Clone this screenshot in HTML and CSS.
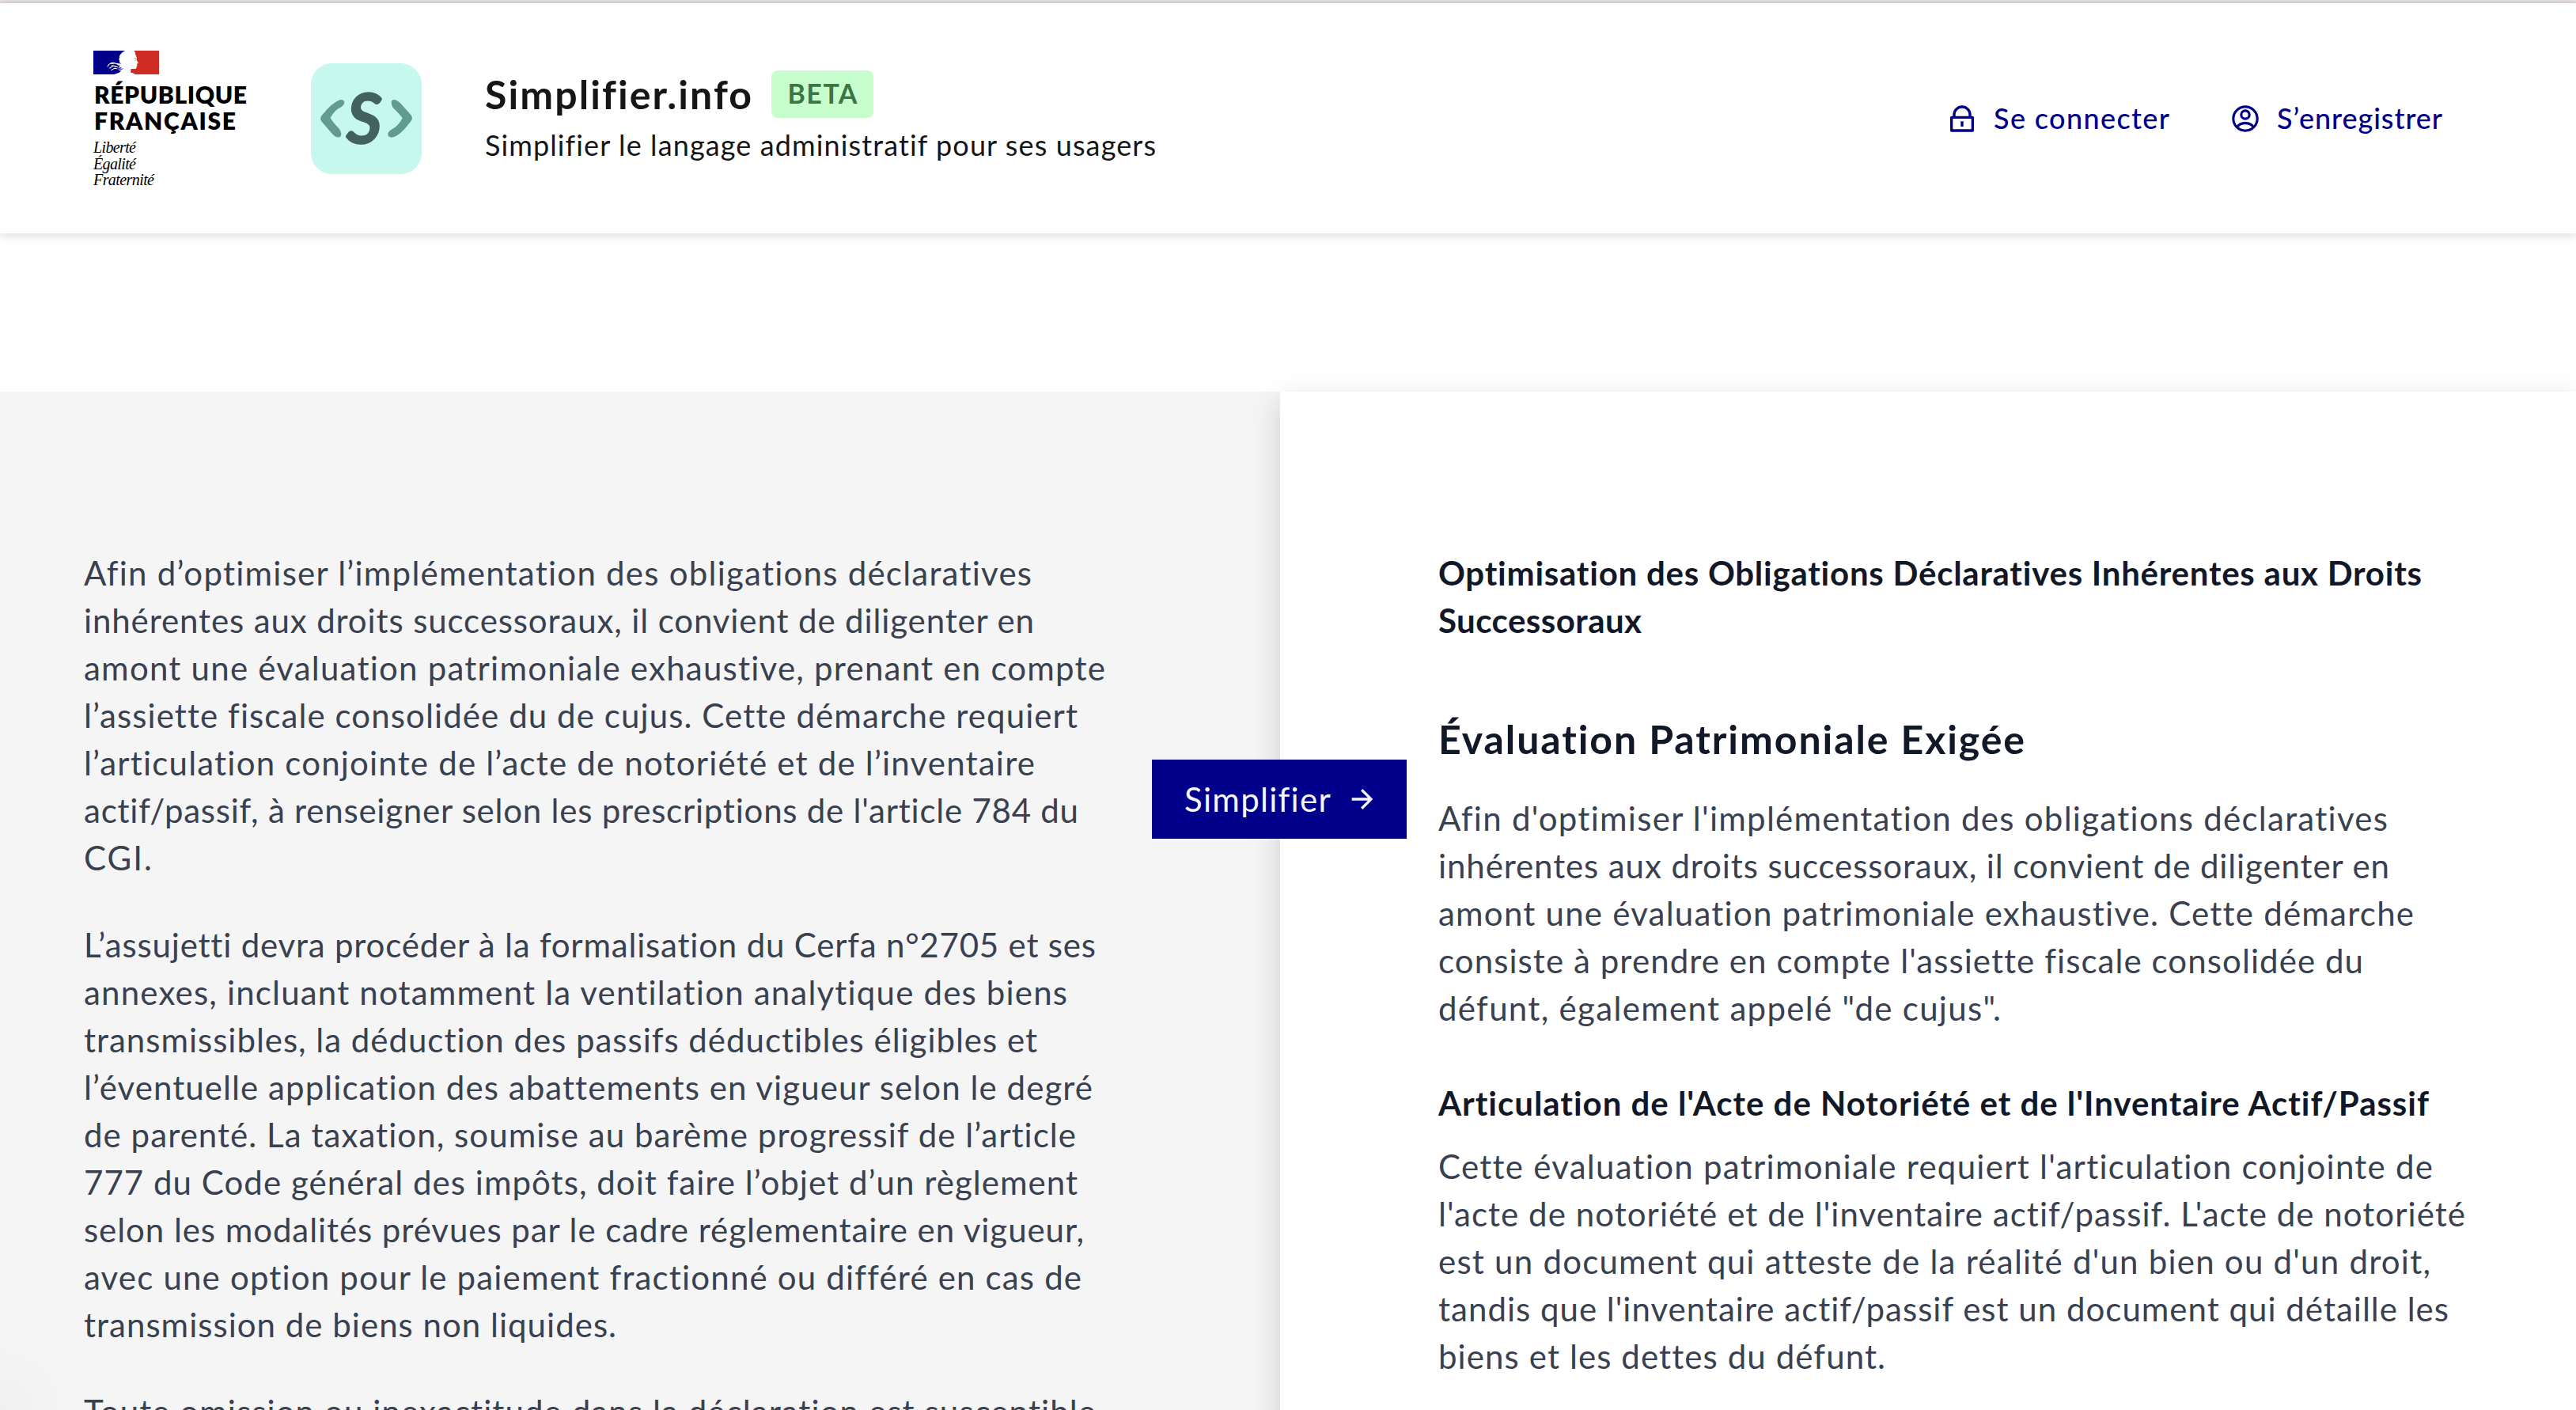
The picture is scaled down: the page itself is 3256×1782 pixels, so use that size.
FILE: index.html
```html
<!DOCTYPE html>
<html lang="fr">
<head>
<meta charset="utf-8">
<title>Simplifier.info</title>
<link rel="stylesheet" href="styles.css">
</head>
<body>
<div class="top-strip"></div>
<header class="header">
  <div class="brand">
    <svg class="flag" viewBox="54 72 248 90" preserveAspectRatio="none" aria-hidden="true">
      <rect x="54" y="72" width="248" height="90" fill="#fff"/>
      <path fill="#00008b" d="M54 72H174Q160 78 155 88Q151 93 153 98Q148 104 153 110Q150 116 158 120Q164 126 165 136L160 150Q150 158 132 162H54Z"/>
      <path fill="#cf2c24" d="M207 72H302V162H212Q203 155 195 155Q195 148 196 141H213Q219 139 217 133L220 128L218 123L224 119L217 107L218 98L213 86Q214 78 207 72Z"/>
      <path fill="none" stroke="#fff" stroke-width="3" stroke-linecap="round" d="M108 132Q113 119 128 121Q138 118 150 127M119 120Q128 115 140 121L156 124M116 138L128 130L146 134M122 146L134 139L156 142M124 128L140 131"/>
      <path fill="#fff" d="M148 122L172 120V160H150L160 147L150 150L158 139L148 137L154 130Z"/>
      <path fill="none" stroke="#00008b" stroke-width="2.5" d="M134 144L160 136M140 150L166 140"/>
      <path fill="none" stroke="#777" stroke-width="2" d="M207 101H216M210 108H215"/>
    </svg>
    <div class="republic"><span class="fit" data-width="193">RÉPUBLIQUE</span><span class="fit" data-width="179">FRANÇAISE</span></div>
    <div class="motto"><span class="fit" data-width="54">Liberté</span><span class="fit" data-width="54">Égalité</span><span class="fit" data-width="77">Fraternité</span></div>
  </div>
  <svg class="app-logo" viewBox="879 120 420 420" aria-hidden="true">
    <rect x="879" y="120" width="420" height="420" rx="80" fill="#c7f8ed"/>
    <path fill="#629c91" d="M990 258Q1005 257 1006 269Q1003 283 985 290Q968 300 953 326Q955 335 986 368Q998 385 992 397Q980 407 962 390L920 341Q911 329 920 318Q960 268 990 258Z"/>
    <path fill="#629c91" d="M1190 258Q1205 256 1222 275L1258 316Q1268 328 1258 340Q1215 398 1185 401Q1170 401 1171 387Q1173 378 1187 370Q1210 358 1226 328Q1220 318 1190 288Q1178 265 1190 258Z"/>
    <text class="app-logo-letter" x="1016" y="421">S</text>
  </svg>
  <div class="service">
    <div class="service-row"><span class="service-name fit" data-width="337">Simplifier.info</span><span class="badge"><span class="fit" data-width="88">BETA</span></span></div>
    <p class="tagline fit" data-width="848">Simplifier le langage administratif pour ses usagers</p>
  </div>
  <nav class="links">
    <a class="link"><svg class="icon" viewBox="0 0 24 24"><path fill="currentColor" d="M19 10h1a1 1 0 0 1 1 1v10a1 1 0 0 1-1 1H4a1 1 0 0 1-1-1V11a1 1 0 0 1 1-1h1V9a7 7 0 0 1 14 0v1ZM5 12v8h14v-8H5Zm6 2h2v4h-2v-4Zm6-4V9A5 5 0 0 0 7 9v1h10Z"/></svg><span class="fit" data-width="222">Se connecter</span></a>
    <a class="link"><svg class="icon" viewBox="0 0 24 24"><g fill="none" stroke="currentColor" stroke-width="1.9"><circle cx="12" cy="12" r="9.1"/><circle cx="12" cy="9" r="3.1"/><path d="M5.8 18.3C7.3 16.3 9.5 15.4 12 15.4s4.7.9 6.2 2.9"/></g></svg><span class="fit" data-width="209">S’enregistrer</span></a>
  </nav>
</header>
<main class="workspace">
  <section class="panel source">
    <p>
      <span class="fit" data-width="1198">Afin d’optimiser l’implémentation des obligations déclaratives</span>
      <span class="fit" data-width="1201">inhérentes aux droits successoraux, il convient de diligenter en</span>
      <span class="fit" data-width="1291">amont une évaluation patrimoniale exhaustive, prenant en compte</span>
      <span class="fit" data-width="1256">l’assiette fiscale consolidée du de cujus. Cette démarche requiert</span>
      <span class="fit" data-width="1202">l’articulation conjointe de l’acte de notoriété et de l’inventaire</span>
      <span class="fit" data-width="1257">actif/passif, à renseigner selon les prescriptions de l'article 784 du</span>
      <span class="fit" data-width="86">CGI.</span>
    </p>
    <p>
      <span class="fit" data-width="1279">L’assujetti devra procéder à la formalisation du Cerfa n°2705 et ses</span>
      <span class="fit" data-width="1243">annexes, incluant notamment la ventilation analytique des biens</span>
      <span class="fit" data-width="1205">transmissibles, la déduction des passifs déductibles éligibles et</span>
      <span class="fit" data-width="1275">l’éventuelle application des abattements en vigueur selon le degré</span>
      <span class="fit" data-width="1254">de parenté. La taxation, soumise au barème progressif de l’article</span>
      <span class="fit" data-width="1256">777 du Code général des impôts, doit faire l’objet d’un règlement</span>
      <span class="fit" data-width="1264">selon les modalités prévues par le cadre réglementaire en vigueur,</span>
      <span class="fit" data-width="1261">avec une option pour le paiement fractionné ou différé en cas de</span>
      <span class="fit" data-width="673">transmission de biens non liquides.</span>
    </p>
    <p><span class="fit" data-width="1279">Toute omission ou inexactitude dans la déclaration est susceptible</span></p>
  </section>
  <section class="panel result">
    <h1><span class="fit" data-width="1243">Optimisation des Obligations Déclaratives Inhérentes aux Droits</span><span class="fit" data-width="257">Successoraux</span></h1>
    <h2><span class="fit" data-width="741">Évaluation Patrimoniale Exigée</span></h2>
    <p>
      <span class="fit" data-width="1200">Afin d'optimiser l'implémentation des obligations déclaratives</span>
      <span class="fit" data-width="1202">inhérentes aux droits successoraux, il convient de diligenter en</span>
      <span class="fit" data-width="1233">amont une évaluation patrimoniale exhaustive. Cette démarche</span>
      <span class="fit" data-width="1169">consiste à prendre en compte l'assiette fiscale consolidée du</span>
      <span class="fit" data-width="711">défunt, également appelé "de cujus".</span>
    </p>
    <h3><span class="fit" data-width="1252">Articulation de l'Acte de Notoriété et de l'Inventaire Actif/Passif</span></h3>
    <p>
      <span class="fit" data-width="1257">Cette évaluation patrimoniale requiert l'articulation conjointe de</span>
      <span class="fit" data-width="1298">l'acte de notoriété et de l'inventaire actif/passif. L'acte de notoriété</span>
      <span class="fit" data-width="1254">est un document qui atteste de la réalité d'un bien ou d'un droit,</span>
      <span class="fit" data-width="1277">tandis que l'inventaire actif/passif est un document qui détaille les</span>
      <span class="fit" data-width="565">biens et les dettes du défunt.</span>
    </p>
  </section>
  <button class="simplify" type="button"><span class="fit" data-width="184">Simplifier</span><svg class="icon" viewBox="0 0 24 24"><path fill="currentColor" d="M16.172 11l-5.364-5.364 1.414-1.414L20 12l-7.778 7.778-1.414-1.414L16.172 13H4v-2z"/></svg></button>
</main>
<script src="fit.js"></script>
</body>
</html>
```
FILE: styles.css
```css
* { box-sizing: border-box; margin: 0; padding: 0; }

body {
  width: 3256px;
  height: 1782px;
  overflow: hidden;
  display: flex;
  flex-direction: column;
  background: #fff;
  color: #161616;
  font-family: Lato, "Noto Sans", sans-serif;
  font-variant-ligatures: none;
}

.fit { display: block; width: max-content; white-space: nowrap; }

.top-strip {
  flex: none;
  height: 4px;
  background: #eddfe2;
  border-bottom: 2px solid #d9dae1;
}

.header {
  flex: none;
  display: flex;
  align-items: flex-start;
  height: 291px;
  padding: 60px 169px 0 118px;
  box-shadow: 0 2px 12px rgba(0, 0, 18, .16);
}

.brand { width: 275px; }
.flag { display: block; width: 83px; height: 30px; }

.republic {
  margin: 9px 0 0 1px;
  font-size: 30px;
  line-height: 32.7px;
  font-weight: 800;
  color: #000;
}

.motto {
  margin-top: 8px;
  font: italic 20px/20.5px "Liberation Serif", serif;
  color: #000;
}

.app-logo { width: 140px; height: 140px; margin-top: 16px; }

.app-logo-letter {
  font: italic 400 255px Lato, sans-serif;
  fill: #43625f;
  stroke: #43625f;
  stroke-width: 14px;
  stroke-linejoin: round;
}

.service { margin: 25px 0 0 80px; }
.service-row { display: flex; align-items: center; gap: 25px; height: 60px; }
.service-name { font-size: 50px; line-height: 58px; font-weight: 700; }

.badge {
  display: flex;
  justify-content: center;
  width: 129px;
  height: 60px;
  border-radius: 8px;
  background: #c8fdce;
  color: #3a7642;
  font-size: 34px;
  line-height: 58px;
  font-weight: 700;
}

.tagline { margin-top: 10px; font-size: 36px; line-height: 48px; }

.links {
  display: flex;
  gap: 76px;
  margin: 66px 0 0 auto;
  color: #00008b;
  font-size: 36px;
  line-height: 38px;
  font-weight: 500;
}

.link { display: flex; gap: 20px; }
.icon { flex: none; width: 40px; height: 40px; }

.workspace {
  position: relative;
  flex: 1;
  display: grid;
  grid-template-columns: 1618px 1fr;
  margin-top: 200px;
}

.panel {
  padding-top: 199px;
  color: #394150;
  font-size: 42px;
  line-height: 60px;
}

.source {
  padding-left: 106px;
  background: radial-gradient(circle at 0 1287px, rgba(0, 0, 0, .02), transparent 90px) #f5f5f5;
}

.source p + p { margin-top: 50px; }

.result {
  padding-left: 200px;
  background: #fff;
  box-shadow: 0 12px 36px rgba(0, 0, 18, .16);
}

h1, h2, h3 { color: #111827; font-weight: 700; font-size: 42px; line-height: 60px; }
h2 { margin: 88px 0 38px; font-size: 50px; line-height: 64px; }
h3 { margin: 60px 0 20px; }

.simplify {
  position: absolute;
  left: 1456px;
  top: 465px;
  display: flex;
  align-items: center;
  gap: 20px;
  width: 322px;
  height: 100px;
  padding-left: 41px;
  border: 0;
  background: #00008b;
  color: #f5f5fe;
  font: 400 42px/60px Lato, sans-serif;
}
```
FILE: fit.js
```js
// Tracks each text line so that it spans its intended measure.
document.querySelectorAll('.fit').forEach((line) => {
  const target = Number(line.dataset.width);
  const natural = line.getBoundingClientRect().width;
  const gaps = line.textContent.length - 1;
  const spacing = (target - natural) / gaps;
  line.style.letterSpacing = spacing.toFixed(3) + 'px';
  line.style.marginRight = (-spacing).toFixed(3) + 'px';
});
```
